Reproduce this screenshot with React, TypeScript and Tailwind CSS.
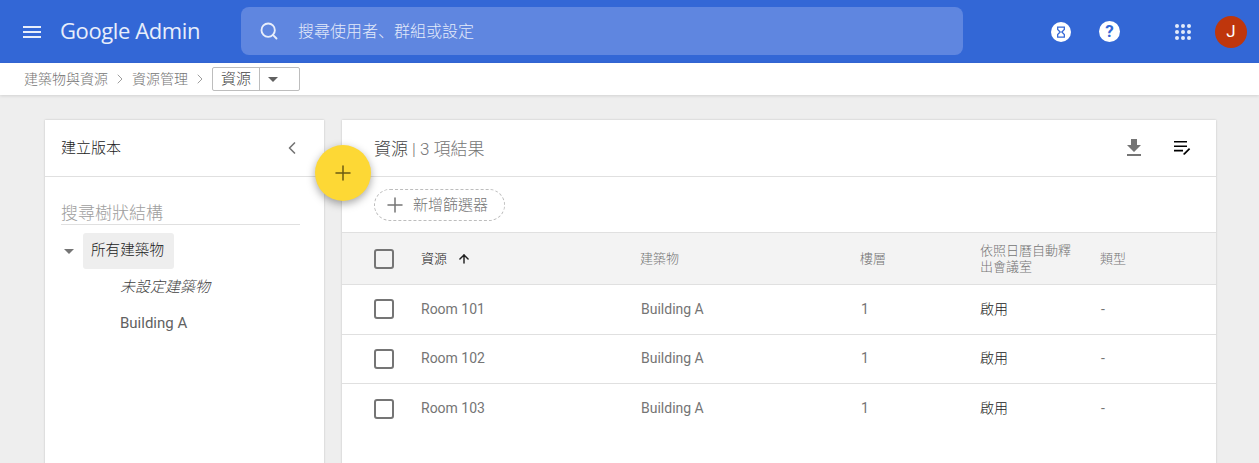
import { Search, ChevronLeft, ChevronRight, Plus, ArrowUp } from 'lucide-react';

const CJK = 'font-["Roboto","Noto_Sans_CJK_TC",sans-serif]';

const rooms = ['Room 101', 'Room 102', 'Room 103'];

function Checkbox() {
  return <div className="h-5 w-5 rounded-[3px] border-2 border-[#757575]" />;
}

function AppsGrid() {
  return (
    <div className="grid grid-cols-3 gap-[2px]">
      {Array.from({ length: 9 }).map((_, i) => (
        <div key={i} className="h-1 w-1 rounded-full bg-[#e3eafa]" />
      ))}
    </div>
  );
}

export default function App() {
  return (
    <div className={`${CJK} flex h-[463px] w-[1259px] flex-col overflow-hidden bg-[#eeeeee]`}>
      {/* top bar */}
      <header className="flex h-[63px] shrink-0 items-center bg-[#3367d6]">
        <svg viewBox="0 0 24 24" className="ml-[20px] h-6 w-6 fill-[#e8eefb]">
          <path d="M3 18h18v-2H3v2zm0-5h18v-2H3v2zm0-7v2h18V6H3z" />
        </svg>
        <span className='ml-[16px] -mt-[2px] w-[181px] font-["Open_Sans",sans-serif] text-[22px] tracking-[-0.4px] text-[#e8eefb]'>
          Google Admin
        </span>
        <div className="-mt-[1px] flex h-12 w-[722px] items-center rounded-lg bg-[#5f86e0]">
          <Search className="ml-[18px] h-5 w-5 text-[#e8eefb]" strokeWidth={2.25} />
          <span className="ml-[19px] text-[16px] font-light text-[#e3eafa]">
            搜尋使用者<span className='font-["Noto_Sans_CJK_JP",sans-serif]'>、</span>群組或設定
          </span>
        </div>
        <div className="ml-[88px] flex h-5 w-5 items-center justify-center rounded-full bg-white">
          <svg viewBox="0 0 12 14" className="h-[12px] w-[10px]">
            <path d="M2 1h8v3L7 7l3 3v3H2v-3l3-3-3-3z" fill="none" stroke="#3367d6" strokeWidth="1.5" />
          </svg>
        </div>
        <div className="ml-[28px] flex h-[21px] w-[21px] items-center justify-center rounded-full bg-white text-[17px] font-bold text-[#3367d6]">
          ?
        </div>
        <div className="ml-[55px]">
          <AppsGrid />
        </div>
        <div className="ml-[24px] flex h-8 w-8 items-center justify-center rounded-full bg-[#bf360c] text-[17px] text-white">
          J
        </div>
      </header>

      {/* breadcrumb */}
      <nav className="z-10 flex h-[32px] shrink-0 items-center bg-white pl-[24px] text-[14px] font-light text-[#757575] shadow-[0_1px_3px_rgba(0,0,0,0.12)]">
        <span>建築物與資源</span>
        <ChevronRight className="mx-[4px] h-4 w-4 text-[#9e9e9e]" strokeWidth={1.5} />
        <span>資源管理</span>
        <ChevronRight className="mx-[4px] h-4 w-4 text-[#9e9e9e]" strokeWidth={1.5} />
        <div className="flex h-[24px] w-[88px] items-center rounded-[2px] border border-[#bdbdbd] text-[#424242]">
          <span className="w-[47px] border-r border-[#bdbdbd] text-center text-[15px] leading-[22px]">資源</span>
          <div className="ml-[8px] h-0 w-0 border-x-[5px] border-t-[5px] border-x-transparent border-t-[#616161]" />
        </div>
      </nav>

      <main className="relative flex flex-1 items-start gap-[18px] pl-[45px] pt-[25px]">
        {/* left panel */}
        <section className="h-[400px] w-[279px] bg-white shadow-[0_0_2px_rgba(0,0,0,0.2)]">
          <div className="flex h-[57px] items-center justify-between border-b border-[#e0e0e0] pl-[16px] pr-[22px] text-[15px] font-light text-[#212121]">
            <span className="pt-[1px]">建立版本</span>
            <ChevronLeft className="h-5 w-5 text-[#757575]" strokeWidth={2} />
          </div>
          <div className="ml-[16px] mt-[25px] w-[239px] border-b border-[#e0e0e0] pt-[1px] text-[17px] font-light leading-[21px] text-[#9e9e9e]">
            搜尋樹狀結構
          </div>
          <div className="mt-[8px] flex items-center">
            <div className="ml-[19px] h-0 w-0 border-x-[5px] border-t-[5px] border-x-transparent border-t-[#757575]" />
            <div className="ml-[9px] flex h-[36px] w-[91px] items-center rounded-[3px] bg-[#eeeeee] pl-[8px] text-[14.6px] font-light text-[#212121]">
              所有建築物
            </div>
          </div>
          <div className="ml-[75px] flex h-[36px] items-center text-[15px] font-light italic text-[#424242]">未設定建築物</div>
          <div className="ml-[75px] flex h-[36px] items-center text-[15px] text-[#616161]">Building A</div>
        </section>

        {/* FAB */}
        <div className="absolute left-[315px] top-[50px] flex h-14 w-14 items-center justify-center rounded-full bg-[#fdd835] shadow-[0_3px_8px_rgba(0,0,0,0.35)]">
          <Plus className="h-6 w-6 text-[#6b5b12]" strokeWidth={1.5} />
        </div>

        {/* results panel */}
        <section className="h-[400px] w-[874px] bg-white shadow-[0_0_2px_rgba(0,0,0,0.2)]">
          <div className="flex h-[57px] items-center border-b border-[#e0e0e0] pl-[32px] text-[17px] font-light">
            <span className="pt-[3px] text-[#424242]">資源</span>
            <span className="ml-[4px] pt-[3px] text-[#757575]">| 3 項結果</span>
            <svg viewBox="0 0 24 24" className="ml-auto h-6 w-6 fill-[#757575]">
              <path d="M19 9h-4V3H9v6H5l7 7 7-7zM5 18v2h14v-2H5z" />
            </svg>
            <svg viewBox="0 0 24 24" className="ml-[24px] mr-[22px] h-6 w-6">
              <path d="M4 5h13v1.6H4zM4 9.4h13V11H4zM4 13.8h9v1.6H4z" fill="#000" />
              <path d="M13.5 17.5l5.5-5.5 1.2 1.2-5.5 5.5h-1.2z" fill="#000" />
            </svg>
          </div>
          <div className="flex h-[56px] items-center border-b border-[#e0e0e0] pl-[32px]">
            <div className="flex h-[32px] w-[131px] items-center rounded-full border border-dashed border-[#bdbdbd] pl-[8px] text-[15px] font-light text-[#757575]">
              <Plus className="h-6 w-6" strokeWidth={1.5} />
              <span className="ml-[6px] pt-[2px]">新增篩選器</span>
            </div>
          </div>
          <div className="grid h-[52px] grid-cols-[79px_220px_220px_120px_120px_1fr] items-center border-b border-[#e0e0e0] bg-[#f3f3f3] text-[13px] font-light text-[#757575]">
            <div className="pl-[32px]">
              <Checkbox />
            </div>
            <div className="flex items-center pt-[1px] text-[#212121]">
              資源
              <ArrowUp className="ml-[10px] h-[14px] w-[14px]" strokeWidth={2.5} />
            </div>
            <div className="-ml-[1px] pt-[1px]">建築物</div>
            <div className="-ml-[1px] pt-[1px]">樓層</div>
            <div className="-ml-[1px] w-[94px] pt-[1px] leading-[16px]">依照日曆自動釋出會議室</div>
            <div className="-ml-[1px] pt-[1px]">類型</div>
          </div>
          {rooms.map((room) => (
            <div
              key={room}
              className="grid h-[49.6px] grid-cols-[79px_220px_220px_120px_120px_1fr] items-center border-b border-[#e0e0e0] text-[14px] text-[#757575] last:border-b-0"
            >
              <div className="pl-[32px]">
                <Checkbox />
              </div>
              <div>{room}</div>
              <div>Building A</div>
              <div>1</div>
              <div className="-ml-[1px] font-light text-[#212121]">啟用</div>
              <div>-</div>
            </div>
          ))}
        </section>
      </main>
    </div>
  );
}
